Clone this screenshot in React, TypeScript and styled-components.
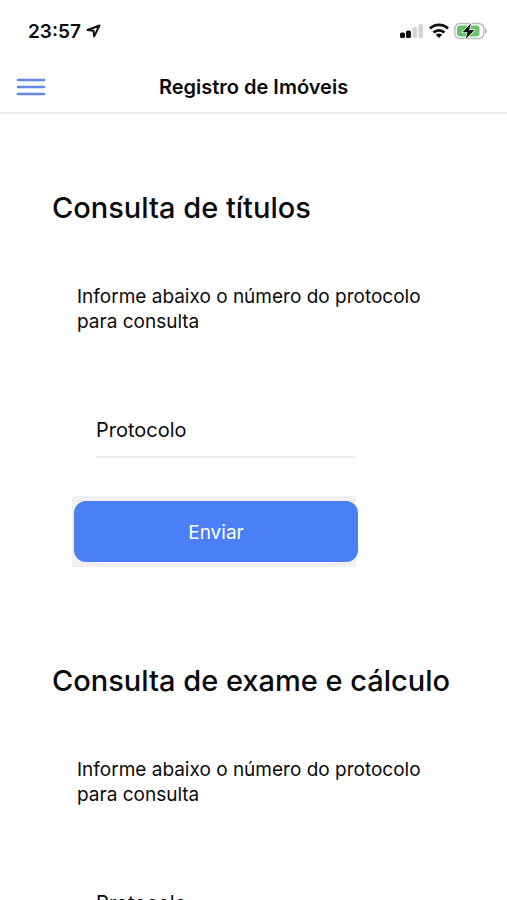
import React, { useId } from 'react';
import styled, { createGlobalStyle } from 'styled-components';

const GlobalStyle = createGlobalStyle`
  * { box-sizing: border-box; }
  body { margin: 0; background: #fff; color: #0b0b0b; font-family: Inter, "Liberation Sans", sans-serif; }
`;

const Screen = styled.div`
  height: 100vh;
  display: flex;
  flex-direction: column;
`;

const StatusBar = styled.div`
  display: flex;
  justify-content: space-between;
  align-items: center;
  height: 60px;
  padding: 2px 20px 0 28px;
  flex: none;
`;

const Clock = styled.div`
  display: flex;
  align-items: center;
  gap: 5px;
  font-size: 19px;
  font-weight: 600;
`;

const Indicators = styled.div`
  display: flex;
  align-items: center;
  gap: 5px;
`;

const Toolbar = styled.header`
  display: grid;
  grid-template-columns: 62px 1fr 62px;
  align-items: center;
  height: 54px;
  padding-top: 2px;
  border-bottom: 2px solid #eeeeef;
  flex: none;
`;

const MenuButton = styled.button`
  border: 0;
  background: none;
  padding: 0 16px;
  display: flex;
  cursor: pointer;
`;

const Title = styled.h1`
  margin: 0;
  text-align: center;
  font-size: 20px;
  line-height: 24px;
  font-weight: 600;
`;

const Content = styled.main`
  flex: 1;
  min-height: 0;
  overflow-y: auto;
  scrollbar-width: none;
  padding: 74px 52px 0;
`;

const Form = styled.form`
  margin-bottom: 94px;
`;

const Heading = styled.h2`
  margin: 0;
  font-size: 29px;
  line-height: 40px;
  font-weight: 500;
  white-space: nowrap;
`;

const Hint = styled.p`
  margin: 56px 0 0;
  padding: 0 0 0 25px;
  max-width: 370px;
  font-size: 19px;
  line-height: 25px;
`;

const Field = styled.div`
  margin: 68px 99px 0 44px;
  border-bottom: 2px solid #eeeeef;
`;

const Input = styled.input`
  display: block;
  width: 100%;
  height: 54px;
  padding: 2px 0 0;
  border: 0;
  outline: 0;
  background: none;
  font: inherit;
  font-size: 20px;
  color: inherit;
  &::placeholder { color: inherit; opacity: 1; }
`;

const ButtonFrame = styled.div`
  margin: 38px 99px 0 20px;
  padding: 5px 0 5px 2px;
  background: #f1f1f1;
`;

const Submit = styled.button`
  display: block;
  width: calc(100% + 2px);
  height: 61px;
  padding: 2px 0 0;
  border: 0;
  border-radius: 12px;
  background: #4a7ff7;
  color: #fff;
  font: inherit;
  font-size: 19px;
  cursor: pointer;
`;

function Lookup({ title }: { title: string }) {
  const id = useId();
  return (
    <Form onSubmit={(e) => e.preventDefault()}>
      <Heading>{title}</Heading>
      <Hint id={id}>Informe abaixo o número do protocolo para consulta</Hint>
      <Field>
        <Input type="text" placeholder="Protocolo" aria-label="Protocolo" aria-describedby={id} />
      </Field>
      <ButtonFrame>
        <Submit type="submit">Enviar</Submit>
      </ButtonFrame>
    </Form>
  );
}

export default function App() {
  return (
    <Screen>
      <GlobalStyle />
      <StatusBar>
        <Clock>
          23:57
          <svg width="15" height="14" viewBox="0 0 15 14" fill="none" stroke="#111" strokeWidth="2" strokeLinejoin="round">
            <path d="M13.500 1.500 1.500 6l6 .8.7 5.600z" />
          </svg>
        </Clock>
        <Indicators>
          <svg width="24" height="16" viewBox="0 0 24 16">
            <rect x="0" y="9.500" width="5" height="5.500" rx="1.500" fill="#111" />
            <rect x="6" y="7.500" width="5" height="7.500" rx="1.500" fill="#111" />
            <rect x="12.500" y="4" width="4.500" height="11" rx="1.500" fill="#d4d4d4" />
            <rect x="18.500" y="1" width="4.500" height="14" rx="1.500" fill="#d4d4d4" />
          </svg>
          <svg width="20" height="16" viewBox="0 0 20 16" fill="none" stroke="#111" strokeWidth="2.800">
            <path d="M1 5.500a13 13 0 0 1 18 0M4.500 9.500a8 8 0 0 1 11 0" />
            <path d="M10 15 6.800 11.800a4.600 4.600 0 0 1 6.400 0z" fill="#111" stroke="none" />
          </svg>
          <svg width="33" height="18" viewBox="0 0 33 18">
            <rect x=".8" y="1.500" width="29" height="15" rx="5" fill="#fff" stroke="#bbb" strokeWidth="1.400" />
            <rect x="3" y="3.500" width="22.500" height="11" rx="3" fill="#65c466" />
            <path d="M31 6v6q2-1 2-3t-2-3z" fill="#bbb" />
            <path d="M17 1.200 8.500 10.200h5L11.700 17l8.800-9h-5.300z" fill="#111" stroke="#fff" strokeWidth="1.600" strokeLinejoin="round" paintOrder="stroke" />
          </svg>
        </Indicators>
      </StatusBar>
      <Toolbar>
        <MenuButton type="button" aria-label="Menu">
          <svg width="30" height="20" viewBox="0 0 30 20" stroke="#6288e8" strokeWidth="2.600" strokeLinecap="round">
            <path d="M2 3h26M2 10h26M2 17h26" />
          </svg>
        </MenuButton>
        <Title>Registro de Imóveis</Title>
      </Toolbar>
      <Content>
        <Lookup title="Consulta de títulos" />
        <Lookup title="Consulta de exame e cálculo" />
      </Content>
    </Screen>
  );
}
